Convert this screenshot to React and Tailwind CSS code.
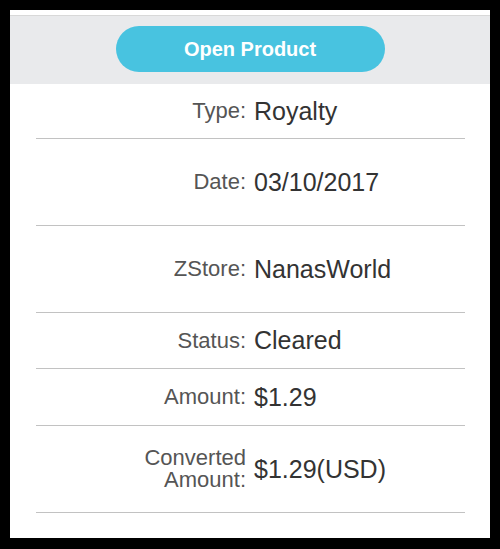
import React from 'react';

const rows = [
  { label: 'Type:', value: 'Royalty', h: 'h-[54px]' },
  { label: 'Date:', value: '03/10/2017', h: 'h-[86px]' },
  { label: 'ZStore:', value: 'NanasWorld', h: 'h-[86px]' },
  { label: 'Status:', value: 'Cleared', h: 'h-[55px]' },
  { label: 'Amount:', value: '$1.29', h: 'h-[56px]' },
  { label: ['Converted', 'Amount:'], value: '$1.29(USD)', h: 'h-[86px]' },
];

function DetailRow({ label, value, h }) {
  return (
    <div>
      <div className={`grid grid-cols-2 gap-2 items-center ${h}`}>
        <div className="text-right text-[22px] leading-[22px] text-[#555]">
          {Array.isArray(label)
            ? label.map((l) => <div key={l}>{l}</div>)
            : label}
        </div>
        <div className="text-[25px] leading-none text-[#333]">{value}</div>
      </div>
      <div className="ml-[26px] mr-[25px] h-px bg-[#c2c2c2]" />
    </div>
  );
}

export default function App() {
  return (
    <div className="w-[500px] h-[549px] bg-black p-[10px] pb-[11px] font-['Liberation_Sans',Arial,sans-serif]">
      <div className="h-full bg-white flex flex-col">
        <div className="h-[5px] bg-white" />
        <div className="h-px bg-[#d8d8d8]" />
        <div className="h-[68px] bg-[#e9eaec] flex justify-center pt-[10px]">
          <button className="w-[269px] h-[46px] rounded-full bg-[#48c3e0] text-white text-[20px] font-bold">
            Open Product
          </button>
        </div>
        {rows.map((r) => (
          <DetailRow key={r.value} {...r} />
        ))}
      </div>
    </div>
  );
}
